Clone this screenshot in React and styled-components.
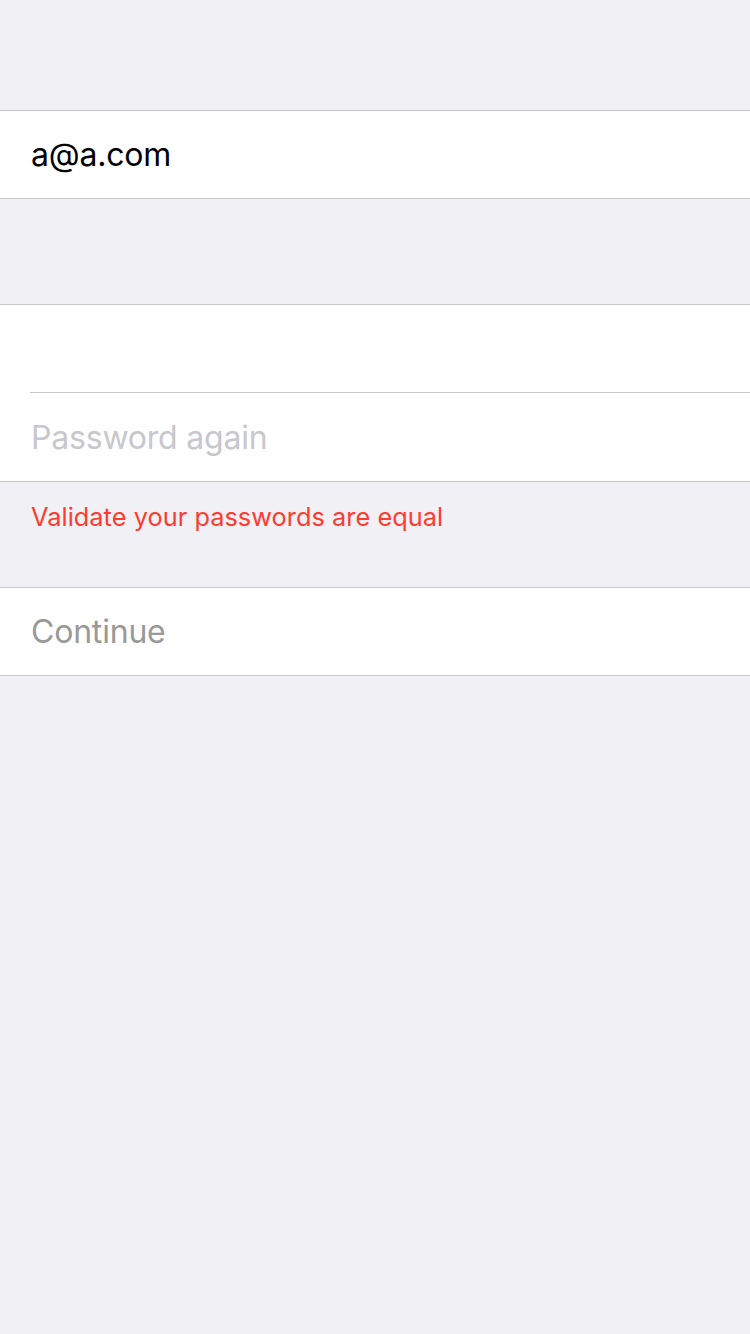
import React from "react";
import styled, { createGlobalStyle } from "styled-components";

const Global = createGlobalStyle`
  html, body { margin: 0; padding: 0; background: #f1f0f5; }
  body { font-family: Inter, "Liberation Sans", Arial, sans-serif; -webkit-font-smoothing: antialiased; }
`;

const Page = styled.div`
  min-height: 1334px;
  background: #f1f0f5;
  padding-top: 110px;
  box-sizing: border-box;
`;

const Section = styled.div`
  background: #ffffff;
  border-top: 1px solid #c8c7cc;
  border-bottom: 1px solid #c8c7cc;
  margin-top: ${(p) => p.$gap || 0}px;
`;

const Row = styled.div`
  height: ${(p) => p.$h || 87}px;
  display: flex;
  align-items: center;
  padding-left: 31px;
  box-sizing: border-box;
`;

const Separator = styled.div`
  height: 1px;
  background: #c8c7cc;
  margin-left: 30px;
`;

const Field = styled.span`
  font-size: 32px;
  letter-spacing: -0.2px;
  color: ${(p) => p.$color || "#000"};
`;

const ErrorText = styled.div`
  padding: 19px 0 0 31px;
  height: 105px;
  box-sizing: border-box;
  font-size: 25.3px;
  color: #ff3b30;
  letter-spacing: 0.05px;
`;

export default function App() {
  return (
    <>
      <Global />
      <Page>
        <Section>
          <Row>
            <Field>a@a.com</Field>
          </Row>
        </Section>
        <Section $gap={105}>
          <Row />
          <Separator />
          <Row $h={88}>
            <Field $color="#c7c7cd">Password again</Field>
          </Row>
        </Section>
        <ErrorText>Validate your passwords are equal</ErrorText>
        <Section>
          <Row>
            <Field $color="#999999">Continue</Field>
          </Row>
        </Section>
      </Page>
    </>
  );
}
